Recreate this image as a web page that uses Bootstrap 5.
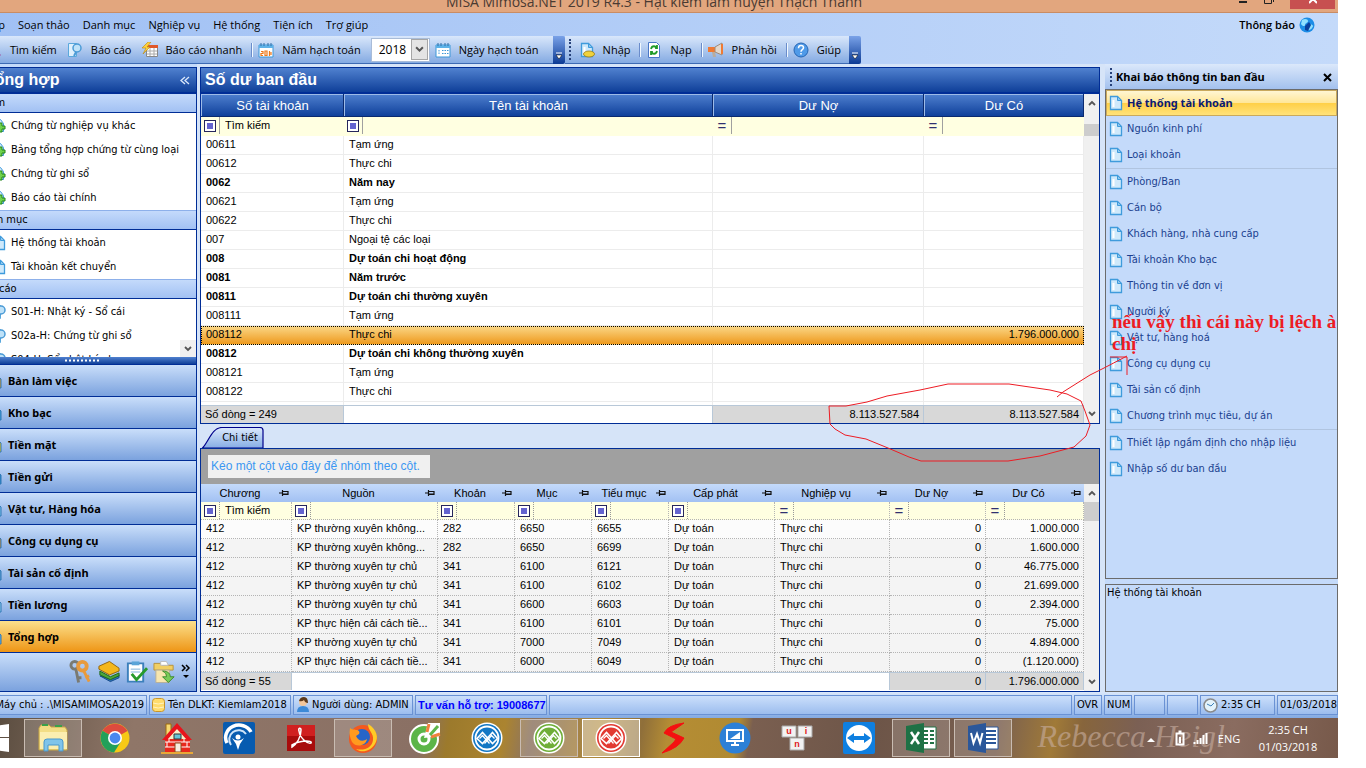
<!DOCTYPE html>
<html lang="vi">
<head>
<meta charset="utf-8">
<meta name="viewport" content="width=device-width, initial-scale=1">
<title>MISA Mimosa.NET 2019</title>
<link href="https://cdn.jsdelivr.net/npm/bootstrap@5.3.0/dist/css/bootstrap.min.css" rel="stylesheet">
<style>
:root{--ui:"DejaVu Sans Condensed","Noto Sans",sans-serif;--uibold:"Noto Sans",sans-serif;--menu:"Open Sans","Noto Sans",sans-serif;--grid:"Liberation Sans",Arial,sans-serif;--navy:#002d96}
body{font:11px/16px var(--ui);color:#000;background:#fff;overflow:hidden}
button,input,select{font:inherit;color:inherit;border:0;background:none;padding:0;margin:0}
button,a{white-space:nowrap}
a{color:inherit;text-decoration:none}
.shell{height:calc(100vh - 10px);min-height:600px;margin:0 28px 0 -30px}
.titlebar{height:13px;background:#e2a67e;border-bottom:1px solid #c98c64;font:14px/20px var(--menu);color:#4a3a32}
.caption-text{margin-top:-8px}
.winbtns{right:0;top:0;height:9px}
.winbtns button{width:26px;height:9px;display:flex;justify-content:center;overflow:hidden}
.winbtns .shut{width:45px;background:#c75050;margin:0 3px 0 8px}
.menubar{height:23px;background:linear-gradient(90deg,#a0c0f4,#c4dafa);font:11px/16px var(--menu)}
.menus{padding-left:16px;gap:13px}
.notice{margin-right:23px;font-weight:600}
.toolrow{height:28px;background:linear-gradient(90deg,#a0c0f4,#c4dafa);font:11px/16px var(--menu)}
.toolset{background:linear-gradient(#d9e7fb,#84aae2);border-bottom:1px solid #3c6ab4}
.toolset button,.toolset label{gap:8px;padding:0 5px}
.toolset label{padding-right:10px}
.toolset svg{width:16px;height:16px}
.one{padding:0 9px 0 11px}
.two{padding:0 3px 0 4px}
.cap{width:12px;background:linear-gradient(#7aa2e8,#0b3a94);border-radius:0 2px 2px 0}
.vsep{width:2px;height:14px;margin-left:4px;border-left:1px solid #6a8ccb;border-right:1px solid #f1f9ff}
.grip{width:2px;border-left:2px dotted #27417a}
.two .grip{margin-right:3px}
.yearbox{width:59px;height:24px;background:#fff;border:1px solid #a9bcd8;font-size:12px}
.yearbox select{appearance:none;width:39px;padding-left:7px}
.yearbox .arr{width:17px;height:21px;background:#e4e4e4;border:1px solid #a6a6a6}
.yearbox .arr svg{width:9px;height:7px}
.workzone{background:#c4dafa;min-height:0}
.mid{background:#d6e4f8;padding:3px 5px 0 3px}
.sidebar{width:227px;margin-top:3px;border:1px solid var(--navy);border-width:1px 1px 1px 0;background:#fff}
.sidelist{min-height:0}
.bluehead{background:linear-gradient(#5081cf,#0f3f99);color:#fff}
.bigtitle{height:26px;font:bold 16px/24px var(--grid);border-bottom:2px solid var(--navy)}
.side-title{padding:0 6px 0 15px}
.main-title{padding-left:4px}
.section{height:19px;background:linear-gradient(#c4dafb,#a2c1f3);border-bottom:1px solid var(--navy);padding-left:7px;line-height:17px}
.links{margin:0;padding:1px 0 0;list-style:none}
.links a{display:flex;height:24px;align-items:center;gap:4px;padding-left:21px}
.links svg{width:16px;height:16px}
.links+.section{border-top:1px solid #8db0ea;height:20px}
.scrollbtn{width:16px;height:17px;background:#f0f0f0;right:0;bottom:0;display:grid;place-items:center}
.split{height:7px}
.navbtn{height:32px;background:linear-gradient(#c9defa,#7ba2de);border-top:1px solid var(--navy);font:bold 11px/16px var(--uibold);padding-left:14px;gap:6px;width:100%;text-align:left}
.navbtn svg{width:18px;height:18px}
.navbtn.on{background:linear-gradient(#fbe08c,#ee9515)}
.strip{height:39px;background:linear-gradient(#c9defa,#7ba2de);border-top:1px solid var(--navy);gap:5px;padding-right:5px}
.strip svg.ic{width:23px;height:24px}
.panel{border:1px solid var(--navy);background:#fff}
table{table-layout:fixed;width:100%;border-collapse:separate;border-spacing:0;font:11px/17px var(--grid)}
td,th{white-space:nowrap;overflow:hidden;padding:0 4px 0 5px}
td{vertical-align:top}
th{font-weight:normal}
.k1{width:143px}.k3{width:211px}.k4{width:160px}
.c90{width:91px}.c77{width:77px}.c106{width:106px}.c115{width:115px}.c96{width:96px}.c98{width:98px}
.g1 th{height:23px;font-size:13px;text-align:center;color:#fff;background:linear-gradient(#4f80cf,#0f409b);border:1px solid #0a2a70;border-width:0 1px 1px 0;box-shadow:inset 1px 1px #9dbbe8}
.g1 td{height:19px;border-right:1px solid #ececec;border-bottom:1px solid #ececec}
.flt td,.g2 .flt td,.g1 .flt td{height:18px;background:#ffffe1;padding:0}
.g1 .flt td{height:19px;border-color:#ffffe1}
.flt input{width:calc(100% - 26px);height:17px;padding-left:5px}
.flt .op{width:19px;height:17px;border-right:1px solid #a0a0a0;display:inline-flex;align-items:center;justify-content:center;font-size:15px;color:#303070}
.g2 .flt .op{border-right:1px dotted #999}
.flt .sq::before{content:"";width:12px;height:12px;border:1px solid #26265c;background:#6464cf;box-shadow:inset 0 0 0 2px #fff}
.g1 .sel{outline:1px dotted #000;outline-offset:-1px}
.g1 .sel td{background:linear-gradient(#fbd888,#ee9a1e);border-color:transparent}
.g1 .gap td{height:3px;border-bottom:0}
.g1 .sum td,.g2 .sum td{height:18px;background:#d8d8d8;border:1px solid #b8c8d8;border-width:1px 1px 0 0;padding-left:4px}
.g1 .sum .blank,.g2 .sum .blank{background:#fff}
.num{text-align:right}
.g2 th{height:18px;text-align:center;background:linear-gradient(#c4dafb,#a2c1f3);padding:0}
.g2 .hd{justify-content:space-between;padding-right:3px}
.g2 td{height:19px;border-right:1px dotted #b4b4b4;border-bottom:1px dotted #b4b4b4;background:#f4f4f4}
.g2 tbody tr:nth-child(2) td{background:#fcfcfc}
.vbar{width:17px;background:#f0f0f0}
.vbar i{width:15px;height:18px}
.thumb{width:15px;background:#cdcdcd}
.t-a{height:12px}.t-b{height:19px}
.tabline{height:24px;padding-top:3px}
.tabbtn{width:64px;height:21px}
.tabbtn svg{left:0;top:0}
.tabbtn span{position:relative;padding-left:16px}
.dropzone{height:35px;flex:none;background:#a0a0a0;padding:0 7px}
.dropzone span{background:#f0f0f0;color:#3b97f2;font:12px/23px var(--grid);padding:0 10px 0 3px}
.aside-r{width:233px;color:#1a3f8f}
.asidehead{height:25px;background:linear-gradient(#dbe8fb,#a3c1ee);color:#000;font:bold 11px/16px var(--uibold);padding:0 6px 0 5px}
.gr2{height:18px}
.outl{border:1px solid #6b6b6b}
.helpbox{height:108px;margin-top:5px;padding-left:1px}
.tasks{margin:0;padding:0;list-style:none}
.tasks a{display:flex;height:26px;align-items:center;gap:3px;padding-left:1px;border:1px solid transparent}
.tasks svg{width:16px;height:16px}
.tasks .on a{color:#0a1a72;font:bold 11px/16px var(--uibold);background:linear-gradient(#fff6d3 0,#ffe79a 48%,#ffd048 52%,#ffe27a);border:1px solid #c9a95c}
.tasks .rule{border-top:1px solid #b0c4e0}
.note{right:0;top:247px;width:226px;font:bold 19px/22px "Liberation Serif",serif;color:#ed1c24;pointer-events:none}
.scribble{right:200px;top:284px;width:320px;height:120px;pointer-events:none}
.status{height:26px;background:linear-gradient(#d9e7fb,#84aae2);padding:3px 0 3px 24px;gap:2px}
.cell{height:20px;border:1px solid #6a92d4;background:linear-gradient(#cbdffb,#9cbdee);padding:0 2px;display:flex;align-items:center;gap:3px;white-space:nowrap;overflow:hidden}
.w153{width:153px}.w142{width:142px}.w120{width:120px}.w132{width:132px}.w28{width:28px}.w31{width:31px}.w75{width:75px}.w61{width:61px}
.hot{color:#00f;font:bold 11px/16px var(--grid)}
.taskbar{height:40px;background:linear-gradient(100deg,#4f4438 0,#6b5a4c 5%,#8f7668 12%,#8a7064 33%,#9c7a2c 35%,#ab8430 39%,#8c7462 41%,#b08a3a 46%,#8f6f3a 49%,#b58d34 51%,#b08a32 56%,#7a5f50 57%,#6d5548 66%,#7a6050 75%,#a07a38 79%,#87653c 81%,#7b6054 85%,#8a6c60 92%,#77594a 100%);padding:0 0 0 2px;gap:4px;font:11px/17px var(--menu);color:#fff}
.slot{width:58px;height:38px;display:grid;place-items:center;flex:none}
.slot svg{width:32px;height:32px}
.slot.open{border:1px solid #c9bcb2;background:#ffffff2b}
.slot.front{border:1px solid #fff;background:#ffffff66}
.startbtn{width:48px}
.sign{right:113px;top:-4px;font:italic 32px/44px "Liberation Serif",serif;color:#c8aea0;opacity:.6}
.tray{gap:8px;padding-right:12px}
.more{margin-right:12px}
.lang{width:26px;text-align:center}
.clock{width:76px}
</style>
</head>
<body>
<svg class="d-none">
<symbol id="doc" viewBox="0 0 16 16"><path d="M2.500 1.500h7l4 4v9h-11z" fill="#cfe9fb" stroke="#3f9bdc" stroke-width="1.300"/><path d="M9.500 1.500v4h4z" fill="#8ec8ee" stroke="#3f9bdc"/><path d="M5.500 5v7" stroke="#fff" stroke-width="2"/></symbol>
<symbol id="plus" viewBox="0 0 16 16"><path d="M2.500 1.500h7l3 4v8h-10z" fill="#cfe9fb" stroke="#3f9bdc"/><path d="M8 5h3v3h3v3h-3v3H8v-3H5V8h3z" fill="#6fd24c" stroke="#23841b"/></symbol>
<symbol id="mag" viewBox="0 0 16 16"><path d="M1.500 1.500h8v13h-8z" fill="#dff0fc" stroke="#5aa8dc"/><circle cx="10" cy="6" r="4" fill="#bfe2f8" stroke="#4b9bd6" stroke-width="1.500"/><path d="M9 10l-2 4" stroke="#4b9bd6" stroke-width="2"/></symbol>
<symbol id="pin" viewBox="0 0 10 8"><path d="M0 4h3.500M3.500 1v6M4 2.500h5v3H4M4 5h5" fill="none" stroke="#111" stroke-width="1.200"/></symbol>
<symbol id="up" viewBox="0 0 8 6"><path d="M1 5l3-3 3 3" fill="none" stroke="#555" stroke-width="1.800"/></symbol>
<symbol id="down" viewBox="0 0 8 6"><path d="M1 1l3 3 3-3" fill="none" stroke="#555" stroke-width="1.800"/></symbol>
<symbol id="capdown" viewBox="0 0 8 8"><path d="M1 1h6" stroke="#fff"/><path d="M1 3h6L4 7z" fill="#fff" stroke="#000" stroke-width=".5"/></symbol>
<symbol id="cal" viewBox="0 0 16 16"><path d="M1 3h14v12H1z" fill="#fff" stroke="#3c97d8"/><path d="M1 3h14v3H1z" fill="#5db2e8"/><path d="M3 1v3M6 1v3M10 1v3M13 1v3" stroke="#2e6fa8"/></symbol>
<symbol id="misa" viewBox="0 0 32 32"><circle cx="16" cy="16" r="15.500" fill="#fff"/><circle cx="16" cy="16" r="14"/><circle cx="16" cy="16" r="11.500" fill="none" stroke="#fff" stroke-width="1.800"/><path d="M6 16.500l5.500-6 10 11 5-5-5-6-10 11z" fill="none" stroke="#fff" stroke-width="1.600"/><path d="M8.500 16.500l3-3 7 8M23.500 16.500l-3-3-7 8" fill="none" stroke="#fff" stroke-width="1.300"/></symbol>
</svg>

<div class="shell d-flex flex-column position-relative overflow-hidden">
<header class="titlebar position-relative overflow-hidden flex-shrink-0">
<div class="caption-text text-center">MISA Mimosa.NET 2019 R4.3 - Hạt kiểm lâm huyện Thạch Thành</div>
<div class="winbtns position-absolute d-flex"><button aria-label="Thu nhỏ"><svg width="8" height="9"><path d="M0 2h8" stroke="#222" stroke-width="2"/></svg></button><button aria-label="Phóng to"><svg width="10" height="9"><path d="M.5-2v5.500h7V-2M9.500-2v4" fill="none" stroke="#222"/></svg></button><button class="shut" aria-label="Đóng"><svg width="8" height="9"><path d="M0 3l4-4 4 4" stroke="#fff" stroke-width="2" fill="none"/></svg></button></div>
</header>

<div class="menubar d-flex align-items-center justify-content-between flex-shrink-0">
<nav class="menus d-flex"><a href="#">Tệp</a><a href="#">Soạn thảo</a><a href="#">Danh mục</a><a href="#">Nghiệp vụ</a><a href="#">Hệ thống</a><a href="#">Tiện ích</a><a href="#">Trợ giúp</a></nav>
<button class="d-flex align-items-center gap-1 notice">Thông báo <svg width="16" height="16" viewBox="0 0 16 16"><circle cx="8" cy="8" r="7.500" fill="#1c8de6"/><path d="M3 3c3-2 6-1 6 1s-3 2-3 4-3 1-4-1zM10 8c2-1 4 0 4 1s-2 4-4 4-1-4 0-5z" fill="#8fe0ff"/><path d="M6 9l4-4 2 3-3 6-3-1z" fill="#0a3f9c"/></svg></button>
</div>

<div class="toolrow d-flex flex-shrink-0">
<div class="toolset d-flex align-items-center one">
<button class="d-flex align-items-center"><svg viewBox="0 0 16 16"><circle cx="7" cy="6" r="4.500" fill="#d6ecfb" stroke="#4b7fc0" stroke-width="1.500"/><path d="M10 10l4 4" stroke="#a05fa8" stroke-width="3"/></svg>Tìm kiếm</button>
<button class="d-flex align-items-center"><svg viewBox="0 0 16 16"><use href="#mag"/></svg>Báo cáo</button>
<button class="d-flex align-items-center"><svg viewBox="0 0 16 16"><path d="M4.500 3.500h11v11h-11z" fill="#fff" stroke="#888"/><path d="M4 3h12v3H4z" fill="#e0582a"/><path d="M5 9h10M5 12h10M8 6v8M12 6v8" stroke="#aaa"/><path d="M6 0L0 6h4L1 12l7-7H5l4-5z" fill="#ffd23c" stroke="#b8860b" stroke-width=".6"/></svg>Báo cáo nhanh</button>
<span class="vsep"></span>
<label for="yr" class="d-flex align-items-center"><svg viewBox="0 0 16 16"><use href="#cal"/><path d="M3 9.500h2v2H3v2h2M7 9h2v4.500H7zM11.500 9v5M13 10v3" fill="none" stroke="#f07818" stroke-width="1.200"/></svg>Năm hạch toán</label>
<span class="yearbox d-flex align-items-center"><select id="yr"><option>2018</option></select><span class="arr d-grid align-items-center justify-content-center"><svg><use href="#down"/></svg></span></span>
<button class="d-flex align-items-center"><svg viewBox="0 0 16 16"><use href="#cal"/><path d="M4 8v5M7 8.500h7M7 11.500h7" stroke="#3c97d8" stroke-dasharray="1.500 1"/></svg>Ngày hạch toán</button>
</div>
<span class="cap d-flex align-items-end justify-content-center pb-1"><svg width="8" height="8"><use href="#capdown"/></svg></span>
<div class="toolset d-flex align-items-center two">
<span class="grip h-75"></span>
<button class="d-flex align-items-center"><svg viewBox="0 0 16 16"><use href="#doc"/><ellipse cx="10" cy="12" rx="5.500" ry="3" fill="#f0d23c" stroke="#9a7c10" stroke-width=".8"/></svg>Nhập</button><span class="vsep"></span>
<button class="d-flex align-items-center"><svg viewBox="0 0 16 16"><path d="M2.500.5h8l3 3v12h-11z" fill="#fff" stroke="#4a78c8"/><path d="M5 7c1-4 5-3 5-1h1v-3M11 9c-1 4-5 3-5 1H5v3" fill="none" stroke="#1f9a28" stroke-width="1.800"/></svg>Nạp</button><span class="vsep"></span>
<button class="d-flex align-items-center"><svg viewBox="0 0 16 16"><path d="M0 5h7v5H0z" fill="#ef7a34"/><path d="M7 5l7-4v12l-7-3z" fill="#e3d8cc" stroke="#a08a78"/><path d="M14 2v10" stroke="#ef7a34" stroke-width="2"/><path d="M4 10l1 5h3l-1-5" fill="#b8aca0"/></svg>Phản hồi</button><span class="vsep"></span>
<button class="d-flex align-items-center"><svg viewBox="0 0 16 16"><circle cx="8" cy="8" r="7" fill="#4f9ae8" stroke="#2766b4"/><path d="M5.500 6.200c0-3.600 5-3.200 5-.4 0 2-2.500 1.700-2.500 3.900M8 11v1.600" fill="none" stroke="#fff" stroke-width="1.500"/></svg>Giúp</button>
</div>
<span class="cap d-flex align-items-end justify-content-center pb-1"><svg width="8" height="8"><use href="#capdown"/></svg></span>
</div>

<main class="workzone d-flex flex-grow-1 position-relative">
<aside class="sidebar d-flex flex-column flex-shrink-0">
<div class="bluehead bigtitle d-flex align-items-center justify-content-between flex-shrink-0 side-title"><span>Tổng hợp</span><svg width="10" height="9"><path d="M5 1L1 4.500 5 8M9 1L5 4.500 9 8" fill="none" stroke="#dbe8fb" stroke-width="1.300"/></svg></div>
<div class="sidelist flex-grow-1 overflow-hidden position-relative" id="sidelist"></div>
<div class="split bluehead d-flex align-items-center justify-content-center flex-shrink-0"><svg width="36" height="3"><path d="M0 1.500h36" stroke="#fff" stroke-width="2" stroke-dasharray="2 2"/></svg></div>
<nav id="modules" class="flex-shrink-0"></nav>
<div class="strip d-flex align-items-center justify-content-end flex-shrink-0">
<svg class="ic" viewBox="0 0 24 24"><circle cx="6" cy="5" r="4" fill="none" stroke="#7a7a72" stroke-width="3"/><path d="M7 8l3 15M9 18h4" stroke="#7a7a72" stroke-width="3"/><circle cx="14" cy="6" r="4.500" fill="none" stroke="#e89a3c" stroke-width="4"/><path d="M15 10l6 12M17 18l4-2" stroke="#e89a3c" stroke-width="3"/></svg>
<svg class="ic" viewBox="0 0 24 24"><path d="M3 16l11 6 9-4v-3l-9 4z" fill="#2b6fc0" stroke="#134a88"/><path d="M3 11l11 6 9-4v3l-9 4-11-5z" fill="#4da63c" stroke="#1e661a"/><path d="M2 6l11-5 10 7v3l-10 4L2 9z" fill="#f4b71c" stroke="#94650c"/></svg>
<svg class="ic" viewBox="0 0 24 24"><path d="M3 3h16v19H3z" fill="#fff" stroke="#3c80bc" stroke-width="2"/><path d="M7 1h8v4H7z" fill="#5aa4d8"/><path d="M6 9h10M6 12h10" stroke="#7ab0d8"/><path d="M7 14l5 6L23 8" fill="none" stroke="#279a2c" stroke-width="3"/></svg>
<svg class="ic" viewBox="0 0 24 24"><path d="M1 3h7l2 2h11v5H1z" fill="#f1cf63" stroke="#b8923a"/><path d="M8 1h6l2 4H8z" fill="#fff" stroke="#bbb"/><path d="M3 10h14v13H3z" fill="#f7e6ae" stroke="#b8b098"/><path d="M10 11c6 0 8 3 8 6h4l-6 6-6-6h4c0-3-1-4-4-6z" fill="#7acb58" stroke="#3c8a2c"/></svg>
<svg width="10" height="16" viewBox="0 0 10 16"><path d="M1 1l3 3-3 3M5 1l3 3-3 3" fill="none" stroke="#000" stroke-width="1.500"/><path d="M2 11h6l-3 3z"/></svg>
</div>
</aside>

<section class="mid flex-grow-1 d-flex flex-column overflow-hidden">
<div class="panel flex-shrink-0">
<h1 class="bluehead bigtitle m-0 main-title">Số dư ban đầu</h1>
<div class="d-flex">
<div class="flex-grow-1 overflow-hidden"><table class="g1"><colgroup><col class="k1"><col><col class="k3"><col class="k4"></colgroup><thead><tr><th>Số tài khoản</th><th>Tên tài khoản</th><th>Dư Nợ</th><th>Dư Có</th></tr></thead><tbody id="t1"></tbody>
<tfoot><tr class="gap"><td></td><td></td><td></td><td></td></tr><tr class="sum"><td>Số dòng = 249</td><td class="blank"></td><td class="num">8.113.527.584</td><td class="num">8.113.527.584</td></tr></tfoot></table></div>
<div class="vbar d-flex flex-column justify-content-between"><div><i class="d-grid align-items-center justify-content-center mb-2"><svg width="8" height="6"><use href="#up"/></svg></i><div class="pt-1"></div><div class="thumb t-a"></div></div><i class="d-grid align-items-center justify-content-center"><svg width="8" height="6"><use href="#down"/></svg></i></div>
</div></div>
<div class="tabline flex-shrink-0"><button class="tabbtn position-relative"><svg class="position-absolute" width="64" height="21" viewBox="0 0 64 21"><defs><linearGradient id="tg" x2="0" y2="1"><stop stop-color="#dbe9fc"/><stop offset="1" stop-color="#86ade4"/></linearGradient></defs><path d="M2.500 21C9 14 12 .5 22 .5h38q3 0 3 3V21z" fill="url(#tg)" stroke="#00008b" stroke-width="1.200"/></svg><span>Chi tiết</span></button></div>
<div class="panel flex-grow-1 overflow-hidden d-flex flex-column">
<div class="dropzone d-flex align-items-center"><span>Kéo một cột vào đây để nhóm theo cột.</span></div>
<div class="d-flex flex-grow-1">
<div class="flex-grow-1 overflow-hidden"><table class="g2"><colgroup><col class="c90"><col><col class="c77"><col class="c77"><col class="c77"><col class="c106"><col class="c115"><col class="c96"><col class="c98"></colgroup><thead><tr id="h2"></tr></thead><tbody id="t2"></tbody><tfoot><tr class="sum"><td>Số dòng = 55</td><td class="blank" colspan="6"></td><td class="num">0</td><td class="num">1.796.000.000</td></tr></tfoot></table></div>
<div class="vbar d-flex flex-column justify-content-between"><div><i class="d-grid align-items-center justify-content-center"><svg width="8" height="6"><use href="#up"/></svg></i><div class="thumb t-b"></div></div><i class="d-grid align-items-center justify-content-center"><svg width="8" height="6"><use href="#down"/></svg></i></div>
</div></div>
</section>

<aside class="aside-r flex-shrink-0 d-flex flex-column">
<div class="asidehead d-flex align-items-center justify-content-between flex-shrink-0"><span class="d-flex align-items-center gap-1"><span class="grip gr2"></span>Khai báo thông tin ban đầu</span><button aria-label="Đóng"><svg width="9" height="9"><path d="M1 1l7 7M8 1L1 8" stroke="#000" stroke-width="2"/></svg></button></div>
<div class="outl flex-grow-1 overflow-hidden"><ul class="tasks" id="tasks"></ul></div>
<div class="outl helpbox text-black flex-shrink-0">Hệ thống tài khoản</div>
</aside>

<svg class="scribble position-absolute" viewBox="818 348 320 120" fill="none" stroke="#ed1c24"><path d="M829 406h17l21-4 20-6 33-6 28-6h61l41 6 17 4 14 7 4 10 5 14-4 11-12 11-34 9-32 5h-87l-12-4-21-9-22-9-21-4-10-6-5-5zM1057 397l6-5 27-17 14-7 23-12M1110 357h17v18"/></svg>
<div class="note position-absolute">nếu vậy thì cái này bị lệch à chị</div>
</main>

<footer class="status d-flex flex-shrink-0">
<span class="cell w153 justify-content-end">Máy chủ : .\MISAMIMOSA2019</span>
<span class="cell w142"><svg width="13" height="14" viewBox="0 0 13 14"><rect x=".5" y=".5" width="12" height="13" rx="3" fill="#ffdc6c" stroke="#c8952c"/><path d="M1 5q5 2 11 0M1 9q5 2 11 0" stroke="#fff3c0" fill="none"/></svg>Tên DLKT: Kiemlam2018</span>
<span class="cell w120"><svg width="13" height="16" viewBox="0 0 13 16"><circle cx="7" cy="5" r="4" fill="#f3c79c"/><path d="M3 4q1-4 5-4t4 6q-3 0-4-3-2 2-5 1" fill="#5c3a1c"/><path d="M1 15q0-6 6-6t6 6z" fill="#3c8ad8"/></svg>Người dùng: ADMIN</span>
<a href="#" class="cell w132 hot">Tư vấn hỗ trợ: 19008677</a>
<span class="cell flex-grow-1"></span><span class="cell w28">OVR</span><span class="cell w28">NUM</span><span class="cell w31"></span><span class="cell w31"></span>
<span class="cell w75"><svg width="15" height="15"><circle cx="7.500" cy="7.500" r="6.500" fill="#e4f3fb" stroke="#8a8a8a" stroke-width="1.500"/><path d="M4 6l4 2 3-3" fill="none" stroke="#3c80b8"/></svg>2:35 CH</span><span class="cell w61">01/03/2018</span>
</footer>

<div class="taskbar d-flex align-items-center flex-shrink-0 position-relative">
<button class="slot startbtn" aria-label="Start"><svg viewBox="0 0 32 32"><path d="M3 6l11-2v11H3zM15 4l14-2v13H15zM3 16h11v11L3 26zM15 16h14v14l-14-2z" fill="#fff"/></svg></button>
<button class="slot open" aria-label="File Explorer"><svg viewBox="0 0 32 32"><path d="M2 6l2-3h8l2 2h14l2 3v20H2z" fill="#f2dd84" stroke="#c8a848"/><path d="M5 3h6M18 4h7" stroke="#3aa04a" stroke-width="2"/><path d="M3 10h27v17H3z" fill="#fbeeb0"/><path d="M7 20q0-3 3-3h13q3 0 3 3v9h-4v-6H11v6H7z" fill="#7fc4ea" stroke="#4a98cc"/></svg></button>
<button class="slot" aria-label="Chrome"><svg viewBox="0 0 32 32"><circle cx="16" cy="16" r="14.500" fill="#f6c915"/><path d="M16 16L3.500 8.800A14.500 14.500 0 0 1 28.500 9z" fill="#dd4b3e"/><path d="M16 16L3.500 8.800A14.500 14.500 0 0 0 15 30.500l7-11z" fill="#22a05a"/><circle cx="16" cy="16" r="7" fill="#fff"/><circle cx="16" cy="16" r="5.400" fill="#4a88ee"/></svg></button>
<button class="slot" aria-label="Nhà"><svg viewBox="0 0 32 32"><path d="M5 2h5v12H5z" fill="#f7d870" stroke="#9c6a10"/><path d="M4 16h25v14H4z" fill="#e8281c"/><path d="M4 20h25M4 25h25M8 16v4M23 16v4M6 20v5M26 20v5" stroke="#fff"/><path d="M16 6l10 11H6z" fill="#f8efc8"/><path d="M1 18L16 1l15 17h-5L16 7 6 18z" fill="#e8141c"/><path d="M13 12h7v5h-7z" fill="#67c4d8" stroke="#333"/><path d="M14 21h6v9h-6z" fill="#f6eee0" stroke="#8c4a18"/><path d="M0 31h32" stroke="#e8a838" stroke-width="2"/></svg></button>
<button class="slot" aria-label="Ứng dụng thuế"><svg viewBox="0 0 32 32"><rect width="32" height="32" rx="2" fill="#065bb0"/><path d="M4 21A13 12 0 0 1 28 10" fill="none" stroke="#fff" stroke-width="3.500"/><path d="M8 23A9 9 0 0 1 23 12" fill="none" stroke="#cfe4f8" stroke-width="2"/><circle cx="15" cy="15" r="2.500" fill="#fff"/><path d="M9 16q6 5 12 0l-4 6-2 6-2-6z" fill="#fff"/></svg></button>
<button class="slot" aria-label="Adobe Reader"><svg viewBox="0 0 32 32"><path d="M2 3h28v26H2z" fill="#a80c0c"/><path d="M2 3h28v11H2z" fill="#d02020"/><path d="M7 25c5-3 9-10 9-17 0-3-3-2-2 1 1 7 8 13 12 12 2-3-11-3-19 2z" fill="none" stroke="#fff" stroke-width="1.500"/></svg></button>
<button class="slot open" aria-label="Firefox"><svg viewBox="0 0 32 32"><circle cx="16" cy="17" r="14" fill="#f4581e"/><path d="M21 2c9 5 11 14 7 20-5 8-14 9-19 5 8 2 16-1 17-9 1-7-5-9-5-16z" fill="#ffcb26"/><circle cx="15" cy="15" r="8" fill="#2765c8"/><path d="M3 6c2 2 4 1 6 2 3 0 4 2 3 4l-3 2c2 5 7 6 11 3-1 7-11 9-15 3C3 16 2 12 3 6z" fill="#ff9a1f"/></svg></button>
<button class="slot" aria-label="Cốc Cốc"><svg viewBox="0 0 32 32"><circle cx="15" cy="17" r="14" fill="#5cb548" stroke="#fff" stroke-width="2"/><circle cx="15" cy="17" r="5" fill="none" stroke="#fff" stroke-width="3"/><path d="M15 16L19 1h12v13z" fill="#fff"/><path d="M18 10l2-8M22 15l9-3" stroke="#f0803c" stroke-width="3"/><path d="M21 13l8-9" stroke="#5cb548" stroke-width="3"/></svg></button>
<button class="slot" aria-label="MISA"><svg fill="#1277c4"><use href="#misa"/></svg></button>
<button class="slot open" aria-label="MISA Mimosa X"><svg fill="#6fae38"><use href="#misa"/></svg></button>
<button class="slot front" aria-label="MISA Mimosa"><svg fill="#e23a32"><use href="#misa"/></svg></button>
<button class="slot" aria-label="Ứng dụng S"><svg viewBox="0 0 32 32"><path d="M27 1Q11 3 7 11l12 6-2 3L5 31q17-5 22-15l-13-6z" fill="#f41010" stroke="#f41010"/></svg></button>
<button class="slot" aria-label="Điều khiển màn hình"><svg viewBox="0 0 32 32"><circle cx="16" cy="16" r="15.500" fill="#2d80d6"/><rect x="8" y="8" width="16" height="11" fill="#2d80d6" stroke="#fff" stroke-width="2"/><path d="M11 17l10-7v7z" fill="#fff"/><path d="M12 23h8M16 19v4" stroke="#fff" stroke-width="2"/></svg></button>
<button class="slot" aria-label="UniKey"><svg viewBox="0 0 32 32" font-family="Liberation Sans" font-weight="bold" font-size="9" fill="#e01818" text-anchor="middle"><path d="M1 4h14v11H1zM17 4h14v11H17zM9 16h14v12H9z" fill="#f2f2f2" stroke="#aaa"/><text x="8" y="12">u</text><text x="25" y="12">i</text><text x="16" y="25">n</text></svg></button>
<button class="slot" aria-label="TeamViewer"><svg viewBox="0 0 32 32"><rect width="32" height="32" rx="2" fill="#0e7fe0"/><circle cx="16" cy="16" r="13" fill="#fff"/><path d="M4 16l7-5v3h10v-3l7 5-7 5v-3H11v3z" fill="#0e7fe0"/></svg></button>
<button class="slot open" aria-label="Excel"><svg viewBox="0 0 32 32"><path d="M16 5h15v22H16z" fill="#fff" stroke="#217346"/><path d="M19 9h4M25 9h4M19 13h4M25 13h4M19 17h4M25 17h4M19 21h4M25 21h4" stroke="#217346" stroke-width="2"/><path d="M1 4l18-3v30L1 28z" fill="#1e7145"/><path d="M6 10l8 12M14 10L6 22" stroke="#fff" stroke-width="2.500"/></svg></button>
<button class="slot open" aria-label="Word"><svg viewBox="0 0 32 32"><path d="M16 5h15v22H16z" fill="#fff" stroke="#2b579a"/><path d="M19 9h10M19 13h10M19 17h10M19 21h10" stroke="#2b579a" stroke-width="2"/><path d="M1 4l18-3v30L1 28z" fill="#2b579a"/><path d="M4 11l2.500 10L10 12l3 9 2.500-10" fill="none" stroke="#fff" stroke-width="2"/></svg></button>
<span class="sign position-absolute" aria-hidden="true">Rebecca Heigl</span>
<div class="tray d-flex align-items-center ms-auto position-relative">
<button class="more" aria-label="Biểu tượng ẩn"><svg width="8" height="6"><path d="M0 5h8L4 1z" fill="#fff"/></svg></button>
<svg width="10" height="16"><path d="M1.500 3.500h7v11h-7zM3.500 1.500h3" fill="none" stroke="#fff" stroke-width="2"/><path d="M4 7h2v6H4z" fill="#fff"/></svg>
<svg width="15" height="12"><path d="M1.500 12v-2M4.500 12V8M7.500 12V6M10.500 12V3M13.500 12V1" stroke="#fff" stroke-width="2"/></svg>
<span class="lang">ENG</span>
<div class="text-center clock">2:35 CH<br>01/03/2018</div>
</div>
</div>
</div>
<script>
const $=id=>document.getElementById(id);
const ic=n=>`<svg viewBox="0 0 16 16"><use href="#${n}"/></svg>`;
$('sidelist').innerHTML=[
 ['Thêm','plus',['Chứng từ nghiệp vụ khác','Bảng tổng hợp chứng từ cùng loại','Chứng từ ghi sổ','Báo cáo tài chính']],
 ['Danh mục','doc',['Hệ thống tài khoản','Tài khoản kết chuyển']],
 ['Báo cáo','mag',['S01-H: Nhật ký - Sổ cái','S02a-H: Chứng từ ghi sổ','S04-H: Sổ nhật ký chung']]
].map(([h,i,l])=>`<div class="section">${h}</div><ul class="links">${l.map(t=>`<li><a href="#">${ic(i)}${t}</a></li>`).join('')}</ul>`).join('')+
 '<button class="scrollbtn position-absolute" aria-label="Cuộn xuống"><svg width="8" height="6"><use href="#down"/></svg></button>';
$('modules').innerHTML=[['Bàn làm việc','#d99a2b'],['Kho bạc','#3c9bd8'],['Tiền mặt','#f0c818'],['Tiền gửi','#2b86c8'],['Vật tư, Hàng hóa','#7cc4ec'],['Công cụ dụng cụ','#c88a3c'],['Tài sản cố định','#5a9ad0'],['Tiền lương','#8fd0f0'],['Tổng hợp','#5ab0e8']]
 .map(([t,c],i)=>`<button class="navbtn d-flex align-items-center${i==8?' on':''}"><svg viewBox="0 0 18 18"><path d="M3 4l8-2 6 5v9H3z" fill="${c}" stroke="#2f76b4"/></svg>${t}</button>`).join('');
const sq=l=>`<td><div class="d-flex align-items-center"><span class="op sq"></span><input aria-label="Lọc" value="${l||''}"></div></td>`;
const eq='<td><div class="d-flex align-items-center"><span class="op">=</span><input aria-label="Lọc"></div></td>';
const rows1=[['00611','Tạm ứng'],['00612','Thực chi'],['0062','Năm nay',1],['00621','Tạm ứng'],['00622','Thực chi'],['007','Ngoại tệ các loại'],['008','Dự toán chi hoạt động',1],['0081','Năm trước',1],['00811','Dự toán chi thường xuyên',1],['008111','Tạm ứng'],['008112','Thực chi',0,'1.796.000.000'],['00812','Dự toán chi không thường xuyên',1],['008121','Tạm ứng'],['008122','Thực chi']];
$('t1').innerHTML=`<tr class="flt">${sq('Tìm kiếm')}${sq()}${eq}${eq}</tr>`+rows1.map(r=>`<tr class="${r[2]?'fw-bold':''}${r[3]?'sel':''}"><td>${r[0]}</td><td>${r[1]}</td><td></td><td class="num">${r[3]||''}</td></tr>`).join('');
$('h2').innerHTML=['Chương','Nguồn','Khoản','Mục','Tiểu mục','Cấp phát','Nghiệp vụ','Dư Nợ','Dư Có'].map(t=>`<th><div class="hd d-flex align-items-center"><span class="flex-grow-1">${t}</span><svg width="10" height="8"><use href="#pin"/></svg></div></th>`).join('');
const k='KP thường xuyên không...',c='KP thường xuyên tự chủ',e='KP thực hiện cải cách tiề...';
$('t2').innerHTML=`<tr class="flt">${sq('Tìm kiếm')}${sq().repeat(5)}${eq.repeat(3)}</tr>`+[[k,282,6650,6655,'1.000.000'],[k,282,6650,6699,'1.600.000'],[c,341,6100,6121,'46.775.000'],[c,341,6100,6102,'21.699.000'],[c,341,6600,6603,'2.394.000'],[e,341,6100,6101,'75.000'],[c,341,7000,7049,'4.894.000'],[e,341,6000,6049,'(1.120.000)']]
 .map(r=>`<tr><td>412</td><td>${r[0]}</td><td>${r[1]}</td><td>${r[2]}</td><td>${r[3]}</td><td>Dự toán</td><td>Thực chi</td><td class="num">0</td><td class="num">${r[4]}</td></tr>`).join('');
$('tasks').innerHTML=['Hệ thống tài khoản','Nguồn kinh phí','Loại khoản','Phòng/Ban','Cán bộ','Khách hàng, nhà cung cấp','Tài khoản Kho bạc','Thông tin về đơn vị','Người ký','Vật tư, hàng hoá','Công cụ dụng cụ','Tài sản cố định','Chương trình mục tiêu, dự án','Thiết lập ngầm định cho nhập liệu','Nhập số dư ban đầu']
 .map((t,i)=>`<li class="${i==0?'on':''}${i==3||i==13?'rule':''}"><a href="#">${ic('doc')}${t}</a></li>`).join('');
</script>
<script src="https://cdn.jsdelivr.net/npm/bootstrap@5.3.0/dist/js/bootstrap.bundle.min.js"></script>
</body>
</html>
